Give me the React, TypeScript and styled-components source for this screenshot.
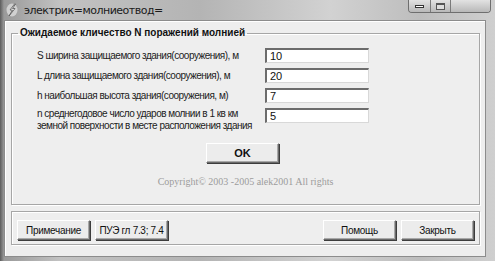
import React from "react";
import styled, { createGlobalStyle } from "styled-components";

const GlobalStyle = createGlobalStyle`
  html, body {
    margin: 0;
    padding: 0;
    background: #6a6a6a;
  }
  * {
    box-sizing: border-box;
  }
`;

const Frame = styled.div`
  width: 495px;
  height: 261px;
  display: flex;
  flex-direction: column;
  padding: 0 9px 4px 4px;
  background: linear-gradient(90deg, #5c5c5c 0px, #9a9a9a 4px, #c2c2c2 60px, #b4b4b4 200px, #d2d2d2 330px, #bdbdbd 420px, #cfcfcf 495px);
  font-family: "Liberation Sans", Arial, sans-serif;
`;

const TitleBar = styled.div`
  height: 20px;
  display: flex;
  align-items: center;
  gap: 6px;
  padding-left: 2px;
`;

const Title = styled.span`
  font-family: "DejaVu Sans", sans-serif;
  font-size: 11px;
  color: #1a1a1a;
  letter-spacing: -0.5px;
`;

const Controls = styled.div`
  margin-left: auto;
  margin-right: -5px;
  align-self: flex-start;
  display: flex;
  height: 13px;
  border: 1px solid #6e6e6e;
  border-top: none;
  border-radius: 0 0 4px 4px;
  overflow: hidden;
`;

const CtrlButton = styled.div<{ $w: number }>`
  width: ${(p) => p.$w}px;
  display: flex;
  align-items: center;
  justify-content: center;
  background: linear-gradient(#e2e2e2, #b8b8b8);
  & + & {
    border-left: 1px solid #7a7a7a;
  }
`;

const MinGlyph = styled.div`
  width: 9px;
  height: 3px;
  background: #fff;
  border: 1px solid #333;
`;

const MaxGlyph = styled.div`
  width: 9px;
  height: 7px;
  border: 1px solid #555;
  border-top-width: 2px;
  background: #ddd;
`;

const Client = styled.div`
  flex: 1;
  display: flex;
  flex-direction: column;
  gap: 6px;
  padding: 5px 5px 5px 6px;
  background: #eeeeee;
  border: 1px solid #8c8c8c;
  box-shadow: inset 1px 1px 0 #ffffff;
`;

const Group = styled.fieldset`
  margin: 0;
  padding: 0;
  border: 1px solid #a6a6a6;
  box-shadow: inset 1px 1px 0 #ffffff, 1px 1px 0 #ffffff;
  min-width: 0;
`;

const Legend = styled.legend`
  margin-left: 6px;
  padding: 0 2px;
  font-size: 10px;
  line-height: 14px;
  font-weight: bold;
  color: #111;
`;

const Form = styled.div`
  display: grid;
  grid-template-columns: 228px 104px;
  row-gap: 5px;
  align-items: center;
  padding: 8px 0 0 25px;
`;

const Label = styled.div<{ $top?: boolean }>`
  font-size: 10px;
  line-height: 12px;
  letter-spacing: -0.5px;
  color: #222;
  align-self: ${(p) => (p.$top ? "start" : "center")};
  white-space: nowrap;
`;

const Input = styled.input<{ $top?: boolean }>`
  width: 104px;
  height: 15px;
  padding: 0 3px;
  font-family: "Liberation Sans", Arial, sans-serif;
  font-size: 11px;
  color: #111;
  background: #fff;
  border: 1px solid #d8d8d8;
  border-top: 2px solid #6c6c6c;
  border-left: 2px solid #6c6c6c;
  outline: none;
  align-self: ${(p) => (p.$top ? "start" : "center")};
`;

const Footer = styled.div`
  display: flex;
  flex-direction: column;
  align-items: center;
  padding: 11px 0 16px;
  gap: 13px;
`;

const Button = styled.button<{ $bold?: boolean }>`
  width: 73px;
  height: 20px;
  padding: 0;
  font-family: "Liberation Sans", Arial, sans-serif;
  font-size: ${(p) => (p.$bold ? "11px" : "10px")};
  font-weight: ${(p) => (p.$bold ? "bold" : "normal")};
  letter-spacing: ${(p) => (p.$bold ? "0" : "-0.3px")};
  color: #111;
  background: #ececec;
  border: 1px solid;
  border-color: #ffffff #6a6a6a #6a6a6a #ffffff;
  box-shadow: inset -1px -1px 0 #a8a8a8, 1px 1px 0 #3c3c3c;
`;

const OkButton = styled(Button)`
  margin-right: 6px;
`;

const Copyright = styled.div`
  font-family: "Liberation Serif", "Times New Roman", serif;
  font-size: 10px;
  line-height: 12px;
  color: #9c9c9c;
`;

const ButtonRow = styled.div`
  display: flex;
  gap: 5px;
  padding: 8px 5px 4px 5px;
`;

const Spacer = styled.div`
  flex: 1;
`;

const BoltIcon = () => (
  <svg width="12" height="14" viewBox="0 0 12 14">
    <ellipse cx="6" cy="7" rx="5.5" ry="6.5" fill="#e6e6e6" opacity="0.7" />
    <path d="M8.5 1 L4 7 L6.5 7 L3 13 L9 5.5 L6.5 5.5 L9.5 1 Z" fill="#f4f4f4" stroke="#555" strokeWidth="0.8" />
  </svg>
);

export default function App() {
  return (
    <>
      <GlobalStyle />
      <Frame>
        <TitleBar>
          <BoltIcon />
          <Title>электрик=молниеотвод=</Title>
          <Controls>
            <CtrlButton $w={21}>
              <MinGlyph />
            </CtrlButton>
            <CtrlButton $w={20}>
              <MaxGlyph />
            </CtrlButton>
            <CtrlButton $w={40} />
          </Controls>
        </TitleBar>
        <Client>
          <Group>
            <Legend>Ожидаемое кличество N поражений молнией</Legend>
            <Form>
              <Label>S ширина защищаемого здания(сооружения), м</Label>
              <Input defaultValue="10" />
              <Label>L длина защищаемого здания(сооружения), м</Label>
              <Input defaultValue="20" />
              <Label>h наибольшая высота здания(сооружения, м)</Label>
              <Input defaultValue="7" />
              <Label $top>
                n среднегодовое число ударов молнии в 1 кв км
                <br />
                земной поверхности в месте расположения здания
              </Label>
              <Input $top defaultValue="5" />
            </Form>
            <Footer>
              <OkButton $bold>OK</OkButton>
              <Copyright>Copyright© 2003 -2005 alek2001 All rights</Copyright>
            </Footer>
          </Group>
          <Group>
            <ButtonRow>
              <Button>Примечание</Button>
              <Button>ПУЭ гл 7.3; 7.4</Button>
              <Spacer />
              <Button>Помощь</Button>
              <Button>Закрыть</Button>
            </ButtonRow>
          </Group>
        </Client>
      </Frame>
    </>
  );
}
